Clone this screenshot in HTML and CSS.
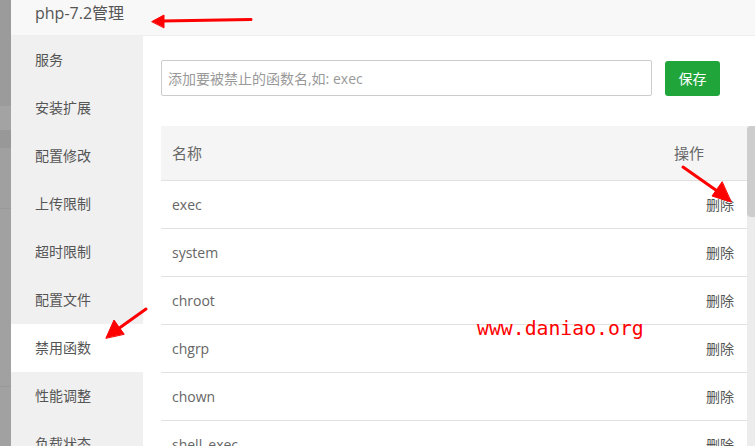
FILE: index.html
```html
<!DOCTYPE html>
<html lang="zh-CN">
<head>
<meta charset="utf-8">
<title>php-7.2管理</title>
<link rel="stylesheet" href="styles.css">
</head>
<body>
<div class="page">
  <div class="backdrop"></div>
  <div class="modal">
    <div class="modal-header">php-7.2管理</div>
    <div class="modal-body">
      <ul class="sidebar">
        <li>服务</li>
        <li>安装扩展</li>
        <li>配置修改</li>
        <li>上传限制</li>
        <li>超时限制</li>
        <li>配置文件</li>
        <li class="active">禁用函数</li>
        <li>性能调整</li>
        <li>负载状态</li>
      </ul>
      <div class="content">
        <div class="form-row">
          <input class="fn-input" type="text" placeholder="添加要被禁止的函数名,如: exec">
          <button class="btn-save">保存</button>
        </div>
        <div class="table-wrap">
          <div class="table">
            <div class="row head"><span class="name">名称</span><span class="op op-head">操作</span></div>
            <div class="row"><span class="name">exec</span><span class="op">删除</span></div>
            <div class="row"><span class="name">system</span><span class="op">删除</span></div>
            <div class="row"><span class="name">chroot</span><span class="op">删除</span></div>
            <div class="row"><span class="name">chgrp</span><span class="op">删除</span></div>
            <div class="row"><span class="name">chown</span><span class="op">删除</span></div>
            <div class="row"><span class="name">shell_exec</span><span class="op">删除</span></div>
          </div>
          <div class="scrollbar"><div class="thumb"></div></div>
        </div>
      </div>
    </div>
  </div>
  <div class="watermark">www.daniao.org</div>
  <svg class="arrows" width="755" height="446" viewBox="0 0 755 446">
    <g fill="#f00" stroke="#f00" stroke-linecap="round">
      <line x1="251" y1="19.5" x2="162" y2="21" stroke-width="3"/>
      <polygon points="152,21.5 164,15 164,27.5" stroke-width="1"/>
      <line x1="683" y1="167" x2="720" y2="193" stroke-width="3"/>
      <polygon points="731,202 712,196 722,182" stroke-width="1"/>
      <line x1="146" y1="309" x2="118" y2="329" stroke-width="3"/>
      <polygon points="106,338 114,320 124,334" stroke-width="1"/>
    </g>
  </svg>
</div>
</body>
</html>
```

FILE: styles.css
```css
* { box-sizing: border-box; }
html, body { margin: 0; padding: 0; }
body {
  width: 755px;
  height: 446px;
  overflow: hidden;
  font-family: "Open Sans", "Noto Sans CJK SC", sans-serif;
  background: #fff;
}
.page {
  position: relative;
  width: 755px;
  height: 446px;
  display: flex;
}
.backdrop {
  width: 11px;
  flex: none;
  background: linear-gradient(to bottom,
    #9b9b9b 0, #9b9b9b 106px,
    #a3a3a3 106px, #a3a3a3 130px,
    #989898 130px, #989898 148px,
    #a0a0a0 148px, #a0a0a0 208px,
    #999 208px, #999 209px,
    #a1a1a1 209px, #a1a1a1 386px,
    #999 386px, #999 387px,
    #a1a1a1 387px);
}
.modal {
  flex: 1;
  display: flex;
  flex-direction: column;
  background: #fff;
  min-width: 0;
}
.modal-header {
  height: 36px;
  flex: none;
  background: #f8f8f8;
  border-bottom: 1px solid #eee;
  padding-left: 24px;
  font-size: 16px;
  line-height: 27px;
  color: #555;
}
.modal-body {
  flex: 1;
  display: flex;
  min-height: 0;
}
.sidebar {
  list-style: none;
  margin: 0;
  padding: 0;
  width: 132px;
  flex: none;
  background: #f0f0f0;
}
.sidebar li {
  height: 48px;
  line-height: 48px;
  padding-left: 24px;
  font-size: 14px;
  color: #555;
}
.sidebar li.active { background: #fff; }
.content {
  flex: 1;
  min-width: 0;
  padding: 24px 0 0 18px;
  display: flex;
  flex-direction: column;
}
.form-row {
  display: flex;
  align-items: center;
  gap: 13px;
}
.fn-input {
  width: 491px;
  height: 36px;
  border: 1px solid #ccc;
  border-radius: 2px;
  padding: 0 6px;
  font-family: "Open Sans", "Noto Sans CJK SC", sans-serif;
  font-size: 14px;
  color: #333;
  outline: none;
}
.fn-input::placeholder { color: #999; }
.btn-save {
  width: 55px;
  height: 35px;
  border: none;
  border-radius: 3px;
  background: #20a53a;
  color: #fff;
  font-family: "Noto Sans CJK SC", sans-serif;
  font-size: 14px;
  padding: 0;
}
.table-wrap {
  margin-top: 30px;
  flex: 1;
  display: flex;
  min-height: 0;
  overflow: hidden;
}
.table {
  flex: 1;
  min-width: 0;
}
.row {
  height: 48px;
  border-bottom: 1px solid #e1e1e1;
  display: flex;
  align-items: center;
  justify-content: space-between;
  padding: 0 13px 1px 11px;
  font-size: 14px;
  color: #666;
}
.row.head {
  height: 55px;
  background: #f5f5f5;
  font-size: 15px;
  padding-right: 43px;
  padding-bottom: 1px;
}
.op { font-family: "Noto Sans CJK SC", sans-serif; color: #555; }
.op-head { color: #666; }
.scrollbar {
  width: 8px;
  flex: none;
  background: #ececec;
}
.thumb {
  height: 91px;
  background: #cdcdcd;
  border-radius: 4px 0 0 4px;
}
.watermark {
  position: absolute;
  left: 477px;
  top: 317px;
  font-family: "DejaVu Sans Mono", monospace;
  font-size: 19.8px;
  line-height: 24px;
  color: #f00;
}
.arrows {
  position: absolute;
  left: 0;
  top: 0;
  pointer-events: none;
}
```
